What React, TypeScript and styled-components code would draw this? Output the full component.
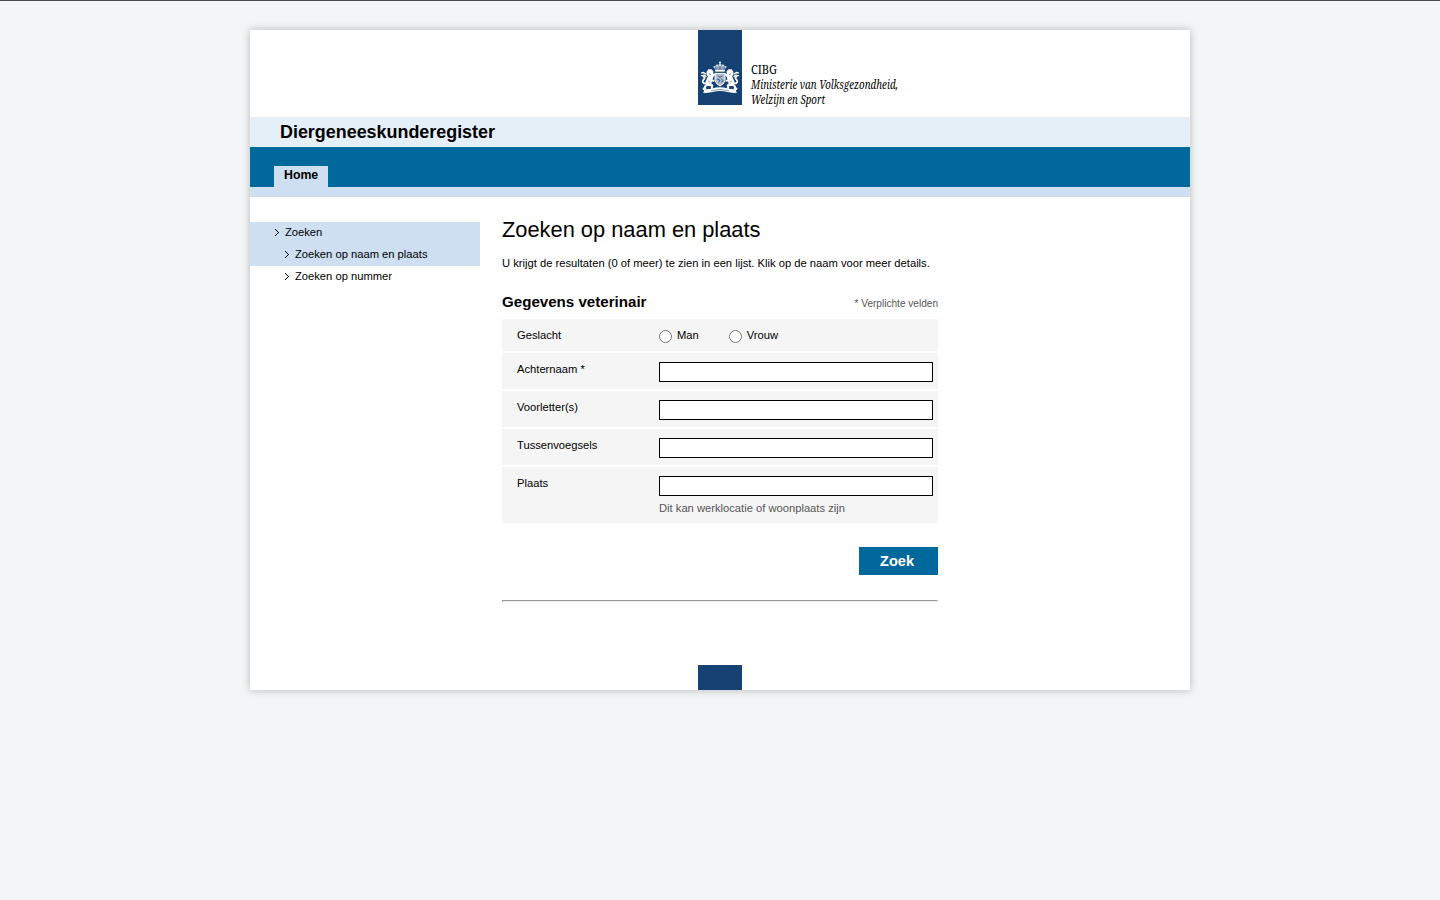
import React from "react";
import styled, { createGlobalStyle } from "styled-components";

const GlobalStyle = createGlobalStyle`
  body {
    margin: 0;
    min-height: 100vh;
    box-sizing: border-box;
    border-top: 1px solid #4d4d54;
    background: #f3f5f7;
    color: #000;
    font: 11.2px/18px "Liberation Sans", Arial, sans-serif;
  }
`;

const Page = styled.div`
  width: 940px;
  height: 660px;
  margin: 29px auto 0;
  display: flex;
  flex-direction: column;
  background: #fff;
  box-shadow: 0 0 8px rgba(0, 0, 0, 0.25);
`;

const Header = styled.header`
  height: 87px;
  padding-left: 448px;
  display: flex;
  align-items: flex-start;

  svg {
    display: block;
    overflow: visible;
  }
`;

const SiteTitle = styled.div`
  height: 30px;
  padding-left: 30px;
  background: #e4eff8;
  font-size: 17.92px;
  font-weight: bold;
  line-height: 30px;
`;

const TabBar = styled.nav`
  height: 40px;
  padding-left: 24px;
  display: flex;
  align-items: flex-end;
  background: #01689b;
  border-bottom: 10px solid #cddff0;
`;

const Tab = styled.a`
  height: 21px;
  padding: 0 10px;
  background: #cddff0;
  font-size: 12.32px;
  font-weight: bold;
  line-height: 18px;
`;

const Body = styled.div`
  flex: 1;
  display: flex;
  align-items: flex-start;
  gap: 22px;
`;

const SideNav = styled.nav`
  width: 230px;
  margin-top: 25px;
`;

const NavItem = styled.a<{ $level: number; $active?: boolean }>`
  height: 22px;
  padding-left: ${(p) => 15 + p.$level * 10}px;
  display: flex;
  align-items: center;
  gap: 6px;
  line-height: 20px;
  background: ${(p) => (p.$active ? "#cddff0" : "transparent")};

  span {
    height: 22px;
  }
`;

const Main = styled.main`
  width: 436px;
`;

const Heading = styled.h1`
  margin: 18px 0 0;
  font-size: 21.84px;
  font-weight: normal;
  line-height: 30px;
`;

const Intro = styled.p`
  margin: 11px 0 0;
  line-height: 14px;
`;

const FormHead = styled.div`
  margin-top: 23px;
  height: 26px;
  display: flex;
  justify-content: space-between;
  align-items: baseline;
`;

const FormTitle = styled.h2`
  margin: 0;
  font-size: 15.12px;
  line-height: 18px;
`;

const Required = styled.span`
  color: #555;
  font-size: 10.08px;
`;

const Form = styled.form`
  display: flex;
  flex-direction: column;
  gap: 2px;
`;

const Row = styled.div<{ $height: number }>`
  box-sizing: border-box;
  height: ${(p) => p.$height}px;
  padding: 9px 5px 0 15px;
  display: flex;
  background: #f5f5f5;
`;

const Label = styled.label`
  width: 142px;
  line-height: 14px;
`;

const Control = styled.div`
  flex: 1;
`;

const Input = styled.input`
  box-sizing: border-box;
  display: block;
  width: 274px;
  height: 20px;
  margin: 0;
  padding: 1px 3px;
  border: 1px solid #000;
  background: #fff;
  font: inherit;
`;

const Hint = styled.div`
  margin-top: 5px;
  color: #555;
  line-height: 14px;
`;

const Radios = styled.div`
  display: flex;
  gap: 30px;
`;

const RadioLabel = styled.label`
  display: flex;
  gap: 5px;
  line-height: 14px;

  input {
    width: 13px;
    height: 13px;
    margin: 2px 0 0;
  }
`;

const Actions = styled.div`
  margin-top: 24px;
  display: flex;
  justify-content: flex-end;
`;

const Submit = styled.button`
  width: 79px;
  height: 28px;
  padding: 0 3px 0 0;
  border: 0;
  background: #01689b;
  color: #fff;
  font: bold 14.56px/28px "Liberation Sans", Arial, sans-serif;
`;

const Rule = styled.hr`
  margin: 25px 0 0;
  border: 1px solid;
  border-color: #9a9a9a #eee #eee #9a9a9a;
`;

const FooterMark = styled.footer`
  width: 44px;
  height: 25px;
  margin-left: 448px;
  background: #154273;
`;

const LogoText = styled.text`
  font-family: "Noto Serif", "Liberation Serif", serif;
  font-size: 12px;
  fill: #000;
`;

function Lion() {
  return (
    <g fill="none" stroke="#fff" strokeLinecap="round" strokeLinejoin="round">
      <path
        d="M9.400 42.600l1.300-1.800 2.600.1 1.600 1.800-.6 1.800.6 2.600-1 3.400-1 3.200-.6 3-3.600-.5-.8-2.800 1.600-3.600 1-2.600-1.600-2.400z"
        fill="#fff"
        strokeWidth="1.2"
      />
      <path d="M13 46.600l2.400-.2 1-1.200M12.600 50.600l2.800 1.200M11.600 54.600l2.600 1.800-.4 2.600" strokeWidth="2" />
      <path d="M9.200 55.600l-2.200 1.800.3 2.200H5.600" strokeWidth="2" />
      <path d="M8 54.400q-3.400.4-3.200-2.200.2-1.600 1.600-2.500.6-1.600-1.200-2.500" strokeWidth="1.700" />
      <path d="M3.600 43.800l2.200-.3 1.600 1.300M3.500 46.600l3-.4 1.600 1.400" strokeWidth="1.300" />
      <path d="M11 44.600l1.400.8M10.600 52.400l1.200.6" stroke="#154273" strokeWidth="0.6" />
    </g>
  );
}

function Logo() {
  return (
    <svg width="210" height="87" viewBox="0 0 210 87" role="img" aria-label="CIBG">
      <rect width="44" height="75" fill="#154273" />
      <g transform="translate(0 -1)">
        <g fill="#fff">
          <circle cx="22" cy="33.3" r="0.9" />
          <path d="M21.5 33h1v4h-1z" />
          <path
            d="M17.8 42.4l-1.8-4.2q1-2.2 3.2-1.8Q21 35 22 35q1 0 2.8 1.4 2.2-.4 3.2 1.8l-1.8 4.2z"
            fillOpacity="0.55"
          />
          <circle cx="16.2" cy="38" r="0.8" />
          <circle cx="27.8" cy="38" r="0.8" />
          <circle cx="19" cy="36.4" r="0.8" />
          <circle cx="25" cy="36.4" r="0.8" />
          <path d="M17.2 41h9.6v1.5h-9.6z" />
        </g>
        <path
          d="M18.2 40.4l-.6-1.8M22 40.5v-3M25.8 40.4l.6-1.8"
          stroke="#154273"
          strokeWidth="0.8"
        />
        <Lion />
        <g transform="translate(44 0) scale(-1 1)">
          <Lion />
        </g>
        <path
          d="M17 44.4h10v7.4q-1.4 3.6-5 5.2-3.6-1.6-5-5.2z"
          fill="#fff"
          fillOpacity="0.65"
          stroke="#fff"
          strokeWidth="1"
        />
        <path
          d="M20.2 46.5l1.4 2 2.6-1.5M19 50l3 1.2-1.6 2.4M23.4 49.6l1.8 2.2-2 1.3"
          fill="none"
          stroke="#154273"
          strokeWidth="0.85"
        />
        <path
          d="M4.6 60q6 .6 9.4-.6 8-2.3 16 0 3.4 1.2 9.4.6l-1.6 1.8 1.2 2q-6 .4-9.4-.7-7.6-2.2-15.2 0-3.4 1.1-9.4.7l1.2-2z"
          fill="#fff"
        />
        <path d="M13 61.6q9-2.3 18 0" fill="none" stroke="#154273" strokeWidth="0.5" />
      </g>
      <LogoText x="53" y="44" textLength="26" lengthAdjust="spacingAndGlyphs">
        CIBG
      </LogoText>
      <LogoText x="53" y="59" textLength="147" lengthAdjust="spacingAndGlyphs" fontStyle="italic">
        Ministerie van Volksgezondheid,
      </LogoText>
      <LogoText x="53" y="74" textLength="74" lengthAdjust="spacingAndGlyphs" fontStyle="italic">
        Welzijn en Sport
      </LogoText>
    </svg>
  );
}

function Chevron() {
  return (
    <svg width="4" height="8" viewBox="0 0 4 8" shapeRendering="crispEdges">
      <path d="M0 0h1v1h1v1h1v1h1v1h-1v1h-1v1h-1v1h-1v-1h1v-1h1v-1h1v-1h-1v-1h-1v-1h-1z" />
    </svg>
  );
}

const links = [
  { text: "Zoeken", level: 1, active: true },
  { text: "Zoeken op naam en plaats", level: 2, active: true },
  { text: "Zoeken op nummer", level: 2, active: false },
];

const fields = [
  { id: "achternaam", label: "Achternaam *" },
  { id: "voorletters", label: "Voorletter(s)" },
  { id: "tussenvoegsels", label: "Tussenvoegsels" },
  { id: "plaats", label: "Plaats", hint: "Dit kan werklocatie of woonplaats zijn" },
];

export default function App() {
  return (
    <>
      <GlobalStyle />
      <Page>
        <Header>
          <Logo />
        </Header>
        <SiteTitle>Diergeneeskunderegister</SiteTitle>
        <TabBar>
          <Tab>Home</Tab>
        </TabBar>
        <Body>
          <SideNav>
            {links.map((l) => (
              <NavItem key={l.text} $level={l.level} $active={l.active}>
                <Chevron />
                <span>{l.text}</span>
              </NavItem>
            ))}
          </SideNav>
          <Main>
            <Heading>Zoeken op naam en plaats</Heading>
            <Intro>
              U krijgt de resultaten (0 of meer) te zien in een lijst. Klik op de naam voor meer
              details.
            </Intro>
            <FormHead>
              <FormTitle>Gegevens veterinair</FormTitle>
              <Required>* Verplichte velden</Required>
            </FormHead>
            <Form>
              <Row $height={32}>
                <Label>Geslacht</Label>
                <Radios>
                  <RadioLabel>
                    <input type="radio" name="geslacht" />
                    Man
                  </RadioLabel>
                  <RadioLabel>
                    <input type="radio" name="geslacht" />
                    Vrouw
                  </RadioLabel>
                </Radios>
              </Row>
              {fields.map((f) => (
                <Row key={f.id} $height={f.hint ? 56 : 36}>
                  <Label htmlFor={f.id}>{f.label}</Label>
                  <Control>
                    <Input id={f.id} type="text" />
                    {f.hint && <Hint>{f.hint}</Hint>}
                  </Control>
                </Row>
              ))}
            </Form>
            <Actions>
              <Submit type="button">Zoek</Submit>
            </Actions>
            <Rule />
          </Main>
        </Body>
        <FooterMark />
      </Page>
    </>
  );
}
